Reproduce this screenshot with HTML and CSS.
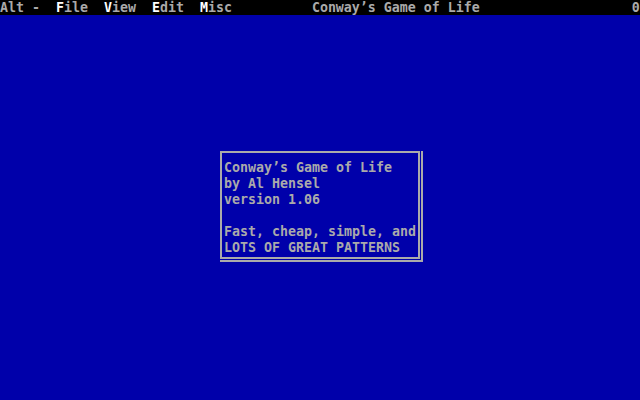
FILE: index.html
```html
<!DOCTYPE html>
<html>
<head>
<meta charset="utf-8">
<title>Conway's Game of Life</title>
<link rel="stylesheet" href="styles.css">
</head>
<body>
<div class="screen">
  <div class="menubar"><span class="menu-line">Alt -  <span class="hot">F</span>ile  <span class="hot">V</span>iew  <span class="hot">E</span>dit  <span class="hot">M</span>isc          Conway’s Game of Life                   0</span></div>
  <div class="desktop">
    <div class="dialog-shadow">
      <div class="dialog">
        <div class="line">Conway’s Game of Life</div>
        <div class="line">by Al Hensel</div>
        <div class="line">version 1.06</div>
        <div class="line">&nbsp;</div>
        <div class="line">Fast, cheap, simple, and</div>
        <div class="line">LOTS OF GREAT PATTERNS</div>
      </div>
    </div>
  </div>
</div>
</body>
</html>
```
FILE: styles.css
```css
html, body {
  margin: 0;
  padding: 0;
  background: #0000aa;
}
.screen {
  width: 640px;
  height: 400px;
  overflow: hidden;
  background: #0000aa;
  color: #aaaaaa;
  font-family: "DejaVu Sans Mono", "Liberation Mono", monospace;
  font-weight: bold;
  font-size: 13.29px;
  line-height: 16px;
}
.menubar {
  height: 15px;
  background: #000000;
  overflow: hidden;
}
.menu-line {
  white-space: pre;
  display: block;
  line-height: 15px;
}
.hot {
  color: #ffffff;
}
.desktop {
  padding: 136px 0 0 220px;
}
.dialog-shadow {
  width: 203px;
  box-sizing: border-box;
  border-right: 2px solid #aaaaaa;
  border-bottom: 2px solid #aaaaaa;
  padding: 0 1px 1px 0;
}
.dialog {
  box-sizing: border-box;
  width: 200px;
  height: 108px;
  border: 2px solid #aaaaaa;
  padding: 7px 0 1px 2px;
}
.line {
  white-space: pre;
  height: 16px;
}
```
